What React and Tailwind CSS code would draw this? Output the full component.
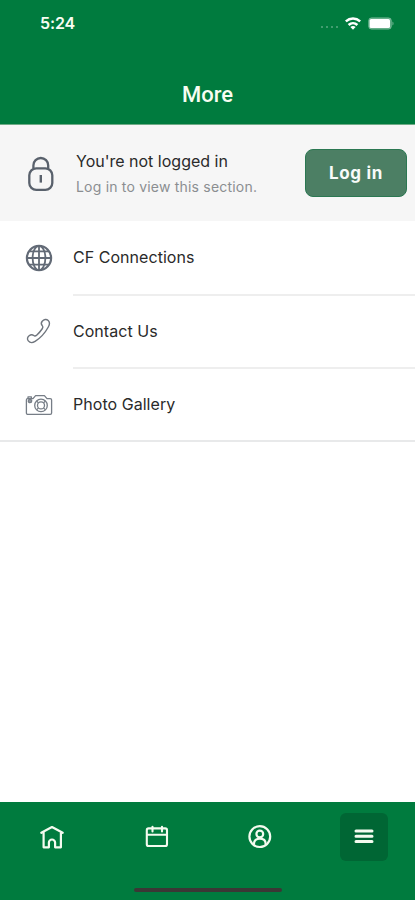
const LockIcon = () => (
    <svg className="mt-0.5" width="28" height="36" viewBox="0 0 28 36" fill="none" stroke="#59616c" strokeWidth="2.3">
        <path d="M6.4 12.6V9.4a7.4 7.4 0 0 1 14.8 0v3.2" />
        <rect x="2.3" y="12.3" width="23" height="21.6" rx="7" />
        <path d="M13.8 19v7.6" strokeWidth="2.4" />
    </svg>
);

const GlobeIcon = () => (
    <svg width="28" height="28" viewBox="0 0 28 28" fill="none" stroke="#626a76" strokeWidth="1.8">
        <circle cx="14" cy="14" r="12.1" strokeWidth="2.2" />
        <ellipse cx="14" cy="14" rx="6.4" ry="12.1" />
        <path d="M14 1.8v24.4M1.8 14h24.4M3.8 7.4h20.4M3.8 20.6h20.4" />
    </svg>
);

const PhoneIcon = () => (
    <svg width="28" height="28" viewBox="0 0 28 28" fill="none" stroke="#6f757d" strokeWidth="1.4" strokeLinejoin="round">
        <path d="M17.2 4.2c1.6-1.8 4.2-2.4 6-.8 1.8 1.7 1.5 4.1.1 6.6-3 5.5-7.4 10.7-13.2 14.4-2.7 1.7-5.3 1.3-6.8-.5-1.4-1.7-.9-3.9.8-5.2 1.5-1.2 3.2-1.4 4.7-.2 1.1.9 2.1.3 3.1-.6 2.3-2 4-4.1 5.5-6.4.7-1.1.7-1.8 0-2.6-1.3-1.5-1.4-3.3-.2-4.7Z" />
    </svg>
);

const CameraIcon = () => (
    <svg className="mt-0.5" width="28" height="22" viewBox="0 0 28 22" fill="none" stroke="#767d86" strokeWidth="1.3" strokeLinejoin="round">
        <path d="M2.6 4.6H8l2.6-3h8.8l2.6 3h3.2c.9 0 1.4.6 1.4 1.4v13c0 .8-.6 1.3-1.4 1.3H2.8c-.8 0-1.4-.5-1.4-1.3V6c0-.8.4-1.4 1.2-1.4Z" />
        <path d="M3 4.4V2.9h3.4v1.5" />
        <circle cx="5" cy="7" r="1.7" fill="#9298a0" />
        <circle cx="16" cy="11.4" r="6.3" />
        <circle cx="16" cy="11.4" r="3.5" />
        <path d="m11.8 7.2 1.7 1.7M20.2 7.2l-1.7 1.7M11.8 15.6l1.7-1.7M20.2 15.6l-1.7-1.7" />
    </svg>
);

const HomeIcon = () => (
    <svg width="24" height="24" viewBox="0 0 24 24" fill="none" stroke="#f4fbef" strokeWidth="2.2" strokeLinecap="round" strokeLinejoin="round">
        <path d="M1.3 7.8 12 2l10.7 5.8M3.6 7v15.3h5.3v-4.7a3.1 3.1 0 0 1 6.2 0v4.7h5.8V7" />
    </svg>
);

const CalendarIcon = () => (
    <svg width="24" height="24" viewBox="0 0 24 24" fill="none" stroke="#f4fbef" strokeWidth="2.1" strokeLinecap="round">
        <rect x="1.8" y="3.4" width="20.2" height="17.6" rx="1.8" />
        <path d="M2.5 9.8h19M7.5 1.8v4.6M17 1.8v4.6" />
    </svg>
);

const ProfileIcon = () => (
    <svg width="24" height="24" viewBox="0 0 24 24" fill="none" stroke="#f4fbef" strokeWidth="2.2">
        <circle cx="11.8" cy="11.6" r="10.4" />
        <circle cx="11.8" cy="9" r="3.4" />
        <path d="M6 19.8v-1.2c0-3.2 2.4-5 5.8-5s5.8 1.8 5.8 5v1.2" />
    </svg>
);

const MenuIcon = () => (
    <svg width="20" height="16" viewBox="0 0 20 16" stroke="#f4fbef" strokeWidth="3" strokeLinecap="round">
        <path d="M2 2h16M2 7.3h16M2 12.6h16" />
    </svg>
);

const links = [
    { label: "CF Connections", icon: GlobeIcon },
    { label: "Contact Us", icon: PhoneIcon },
    { label: "Photo Gallery", icon: CameraIcon },
];

function StatusBar() {
    return (
        <div className="flex h-[46px] items-center justify-between pl-10 pr-[21px]">
            <span className="text-[16px] font-semibold leading-none tracking-[-0.1px]">5:24</span>
            <div className="flex items-center">
                <div className="mr-[7px] mt-2 flex gap-[3px]">
                    {[0, 1, 2, 3].map((dot) => (
                        <span key={dot} className="size-[2px] rounded-full bg-white/35" />
                    ))}
                </div>
                <svg width="16" height="13" viewBox="0 0 16 13" fill="none" stroke="white" strokeWidth="2.5">
                    <path d="M.8 4.4c4.2-3.9 10.2-3.9 14.4 0M3.6 8c2.6-2.4 6.2-2.4 8.8 0" />
                    <path d="M8 12.8 5.4 10c1.5-1.3 3.7-1.3 5.2 0Z" fill="white" stroke="none" />
                </svg>
                <svg className="ml-[7px]" width="26" height="13" viewBox="0 0 26 13">
                    <rect x="0.6" y="0.8" width="22.8" height="11.4" rx="3" fill="white" fillOpacity="0.35" stroke="white" strokeOpacity="0.25" />
                    <rect x="1.6" y="2" width="20.4" height="9" rx="1.6" fill="white" />
                    <path d="M24.5 4.5c1.3.5 1.3 3.5 0 4Z" fill="white" fillOpacity="0.5" />
                </svg>
            </div>
        </div>
    );
}

export default function App() {
    return (
        <div className="flex h-[900px] w-[415px] flex-col bg-white font-['Inter',sans-serif] text-[#2a2a2a]">
            <header className="h-[125px] shrink-0 border-b border-[#6fab86] bg-[#007b3e] text-[#f8fdf2]">
                <StatusBar />
                <h1 className="mt-[33px] text-center font-['Roboto',sans-serif] text-[22px] font-medium leading-8">
                    More
                </h1>
            </header>

            {/* Login prompt */}
            <section className="flex h-[96px] shrink-0 items-center bg-[#f6f6f6] pl-[27px] pr-2">
                <LockIcon />
                <div className="ml-[21px] mt-px flex-1 whitespace-nowrap">
                    <p className="text-[16px] leading-[25px]">You're not logged in</p>
                    <p className="text-[14px] leading-[25px] tracking-[0.2px] text-[#8b8e91]">
                        Log in to view this section.
                    </p>
                </div>
                <button className="h-12 w-[102px] rounded-lg border border-[#2b7852] bg-[#4c7f64] pt-0.5 text-[17px] font-bold tracking-[0.7px] text-[#f8fbf9]">
                    Log in
                </button>
            </section>

            <ul className="shrink-0 border-b-2 border-[#e8e9ea]">
                {links.map(({ label, icon: Icon }, i) => (
                    <li key={label} className="flex h-[73px] items-center">
                        <span className="flex w-[73px] shrink-0 items-center pl-[25px]">
                            <Icon />
                        </span>
                        <span
                            className={`flex h-full flex-1 items-center pb-[2px] text-[16px] tracking-[0.04px] ${
                                i > 0 ? "border-t-2 border-[#eeeeee]" : ""
                            }`}
                        >
                            {label}
                        </span>
                    </li>
                ))}
            </ul>

            <main className="flex-1" />

            <footer className="flex h-[98px] shrink-0 flex-col justify-between bg-[#007b3e] pb-2">
                <nav className="flex items-center justify-between pl-10 pr-[27px] pt-[11px]">
                    <HomeIcon />
                    <span className="ml-[29px]"><CalendarIcon /></span>
                    <span className="ml-[27px]"><ProfileIcon /></span>
                    <span className="ml-[16px] flex size-12 items-center justify-center rounded-md bg-[#006634]">
                        <MenuIcon />
                    </span>
                </nav>
                <div className="ml-[134px] h-1 w-[148px] rounded-full bg-[#3b3735]" />
            </footer>
        </div>
    );
}
